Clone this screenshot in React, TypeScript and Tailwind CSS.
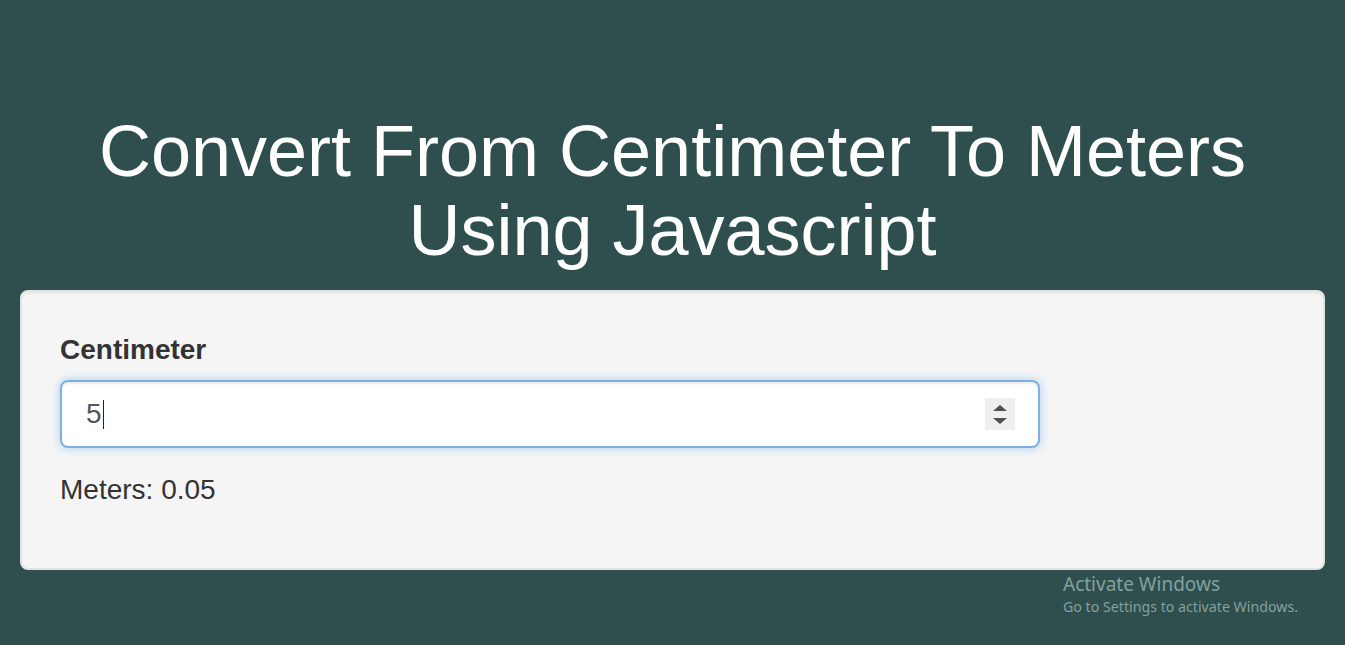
import React from "react";

export default function App() {
  return (
    <div
      className="relative min-h-[645px] w-full bg-[#2f4f4f] px-[20px] pt-[112px]"
      style={{ fontFamily: '"Liberation Sans", Arial, sans-serif' }}
    >
      <h1 className="m-0 text-center text-[72px] font-normal leading-[1.1] text-white">
        Convert From Centimeter To Meters Using Javascript
      </h1>
      <div className="mt-[20px] rounded-[8px] border-2 border-[#e3e3e3] bg-[#f5f5f5] p-[38px] shadow-[inset_0_2px_2px_rgba(0,0,0,0.05)]">
        <label className="block text-[28px] font-bold leading-[40px] text-[#333]">Centimeter</label>
        <div className="relative mt-[10px] flex h-[68px] w-[980px] items-center rounded-[8px] border-2 border-[#7fb0df] bg-white px-[24px] shadow-[inset_0_2px_2px_rgba(0,0,0,0.075),0_0_10px_rgba(102,175,233,0.55)]">
          <span className="text-[28px] leading-[40px] text-[#555]">5</span>
          <span className="ml-[1px] h-[29px] w-[1px] bg-[#222]" />
          <div className="absolute right-[23px] top-1/2 flex h-[32px] w-[30px] -translate-y-1/2 flex-col items-center justify-center gap-[7px] bg-[#efefef]">
            <div className="h-0 w-0 border-x-[7px] border-b-[6px] border-x-transparent border-b-[#4f4f4f]" />
            <div className="h-0 w-0 border-x-[7px] border-t-[6px] border-x-transparent border-t-[#4f4f4f]" />
          </div>
        </div>
        <p className="mb-[20px] mt-[22px] text-[28px] leading-[40px] text-[#333]">Meters: 0.05</p>
      </div>
      <div
        className="absolute left-[1063px] top-[572px] text-[#84a09d]"
        style={{ fontFamily: '"Noto Sans", "Open Sans", sans-serif' }}
      >
        <div className="text-[19px] leading-[24px]">Activate Windows</div>
        <div className="text-[14.2px] leading-[22px]">Go to Settings to activate Windows.</div>
      </div>
    </div>
  );
}
